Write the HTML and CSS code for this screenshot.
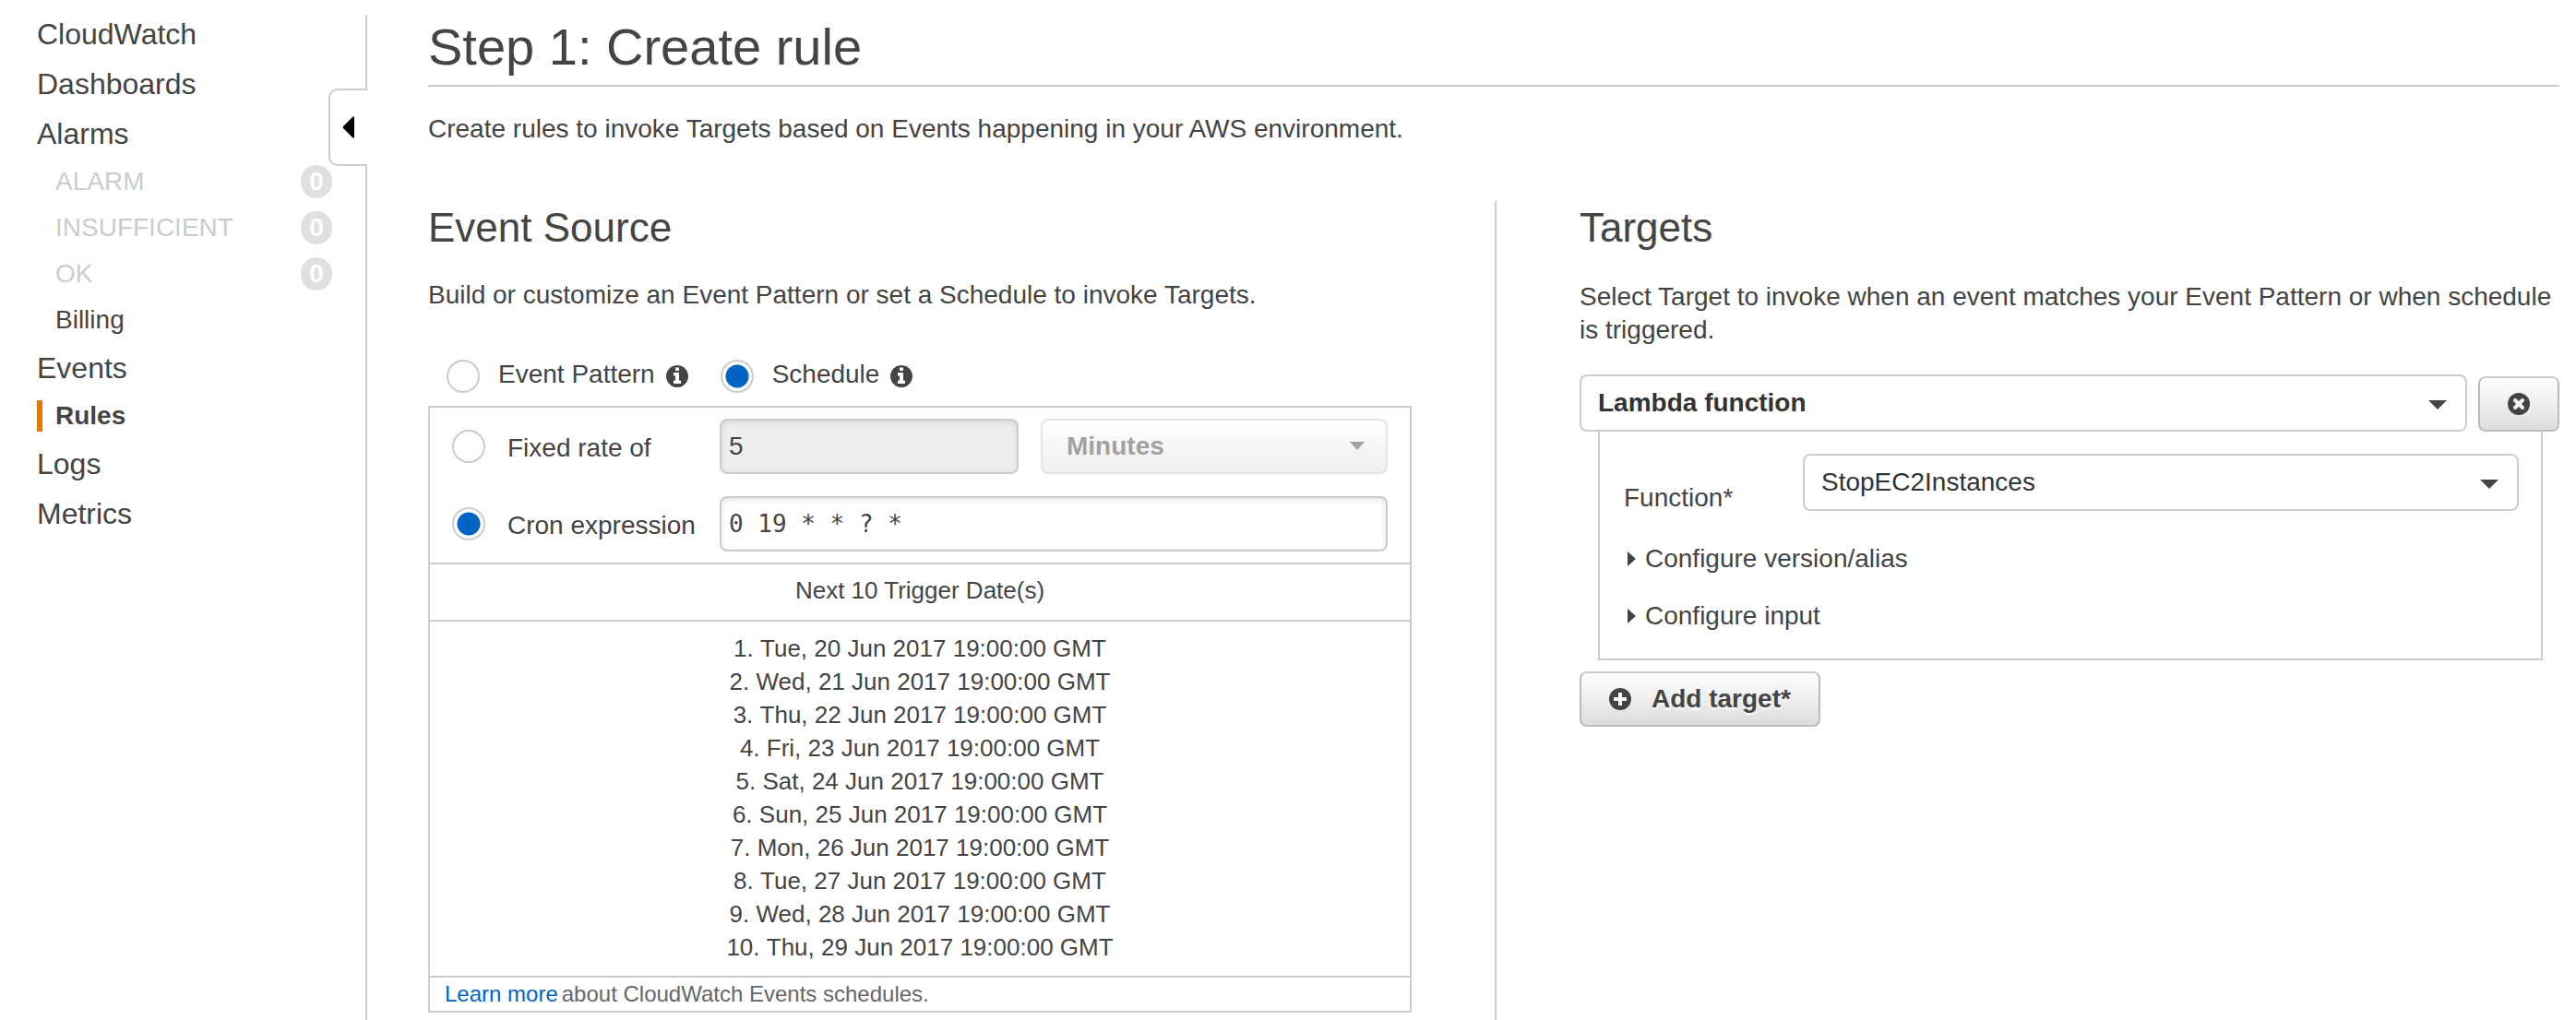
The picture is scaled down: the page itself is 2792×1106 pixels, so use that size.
FILE: index.html
```html
<!DOCTYPE html>
<html lang="en">
<head>
<meta charset="utf-8">
<meta name="viewport" content="width=device-width, initial-scale=1">
<title>CloudWatch - Create rule</title>
<link rel="stylesheet" href="styles.css">
</head>
<body>
<svg class="sprite" aria-hidden="true">
  <symbol id="icon-info" viewBox="0 128 1536 1536">
    <path d="M1024 1376v-160q0-14-9-23t-23-9h-96v-512q0-14-9-23t-23-9h-320q-14 0-23 9t-9 23v160q0 14 9 23t23 9h96v320h-96q-14 0-23 9t-9 23v160q0 14 9 23t23 9h448q14 0 23-9t9-23zm-128-896v-160q0-14-9-23t-23-9h-192q-14 0-23 9t-9 23v160q0 14 9 23t23 9h192q14 0 23-9t9-23zm640 416q0 209-103 385.5t-279.5 279.5-385.5 103-385.5-103-279.5-279.5-103-385.5 103-385.5 279.5-279.5 385.5-103 385.5 103 279.5 279.5 103 385.5z"/>
  </symbol>
</svg>
<div class="layout">
  <nav class="sidebar" aria-label="CloudWatch">
    <ul class="nav">
      <li><a href="#">CloudWatch</a></li>
      <li><a href="#">Dashboards</a></li>
      <li><a href="#">Alarms</a>
        <ul class="subnav">
          <li class="muted"><a href="#">ALARM</a><span class="badge">0</span></li>
          <li class="muted"><a href="#">INSUFFICIENT</a><span class="badge">0</span></li>
          <li class="muted"><a href="#">OK</a><span class="badge">0</span></li>
          <li><a href="#">Billing</a></li>
        </ul>
      </li>
      <li><a href="#">Events</a>
        <ul class="subnav">
          <li class="current"><a href="#" aria-current="page">Rules</a></li>
        </ul>
      </li>
      <li><a href="#">Logs</a></li>
      <li><a href="#">Metrics</a></li>
    </ul>
    <button class="collapse" type="button" aria-label="Collapse navigation">
      <svg width="14" height="24" viewBox="0 0 14 24"><path d="M13 .5V23.500Q12 24 11 23L1 13Q0 12 1 11L11 1Q12 0 13 .5Z"/></svg>
    </button>
  </nav>

  <main class="main">
    <h1>Step 1: Create rule</h1>
    <p class="intro">Create rules to invoke Targets based on Events happening in your AWS environment.</p>

    <form class="columns">
      <section class="source">
        <h2>Event Source</h2>
        <p>Build or customize an Event Pattern or set a Schedule to invoke Targets.</p>

        <div class="modes">
          <input type="radio" name="mode" id="mode-pattern">
          <label for="mode-pattern">Event Pattern</label>
          <svg class="info"><use href="#icon-info"/></svg>
          <input type="radio" name="mode" id="mode-schedule" checked>
          <label for="mode-schedule">Schedule</label>
          <svg class="info"><use href="#icon-info"/></svg>
        </div>

        <div class="panel">
          <div class="schedule">
            <input type="radio" name="schedule" id="fixed-rate">
            <label for="fixed-rate">Fixed rate of</label>
            <input class="text" type="text" value="5" aria-label="Rate" disabled>
            <span class="select select-disabled">
              <select aria-label="Rate unit" disabled><option>Minutes</option></select>
            </span>
            <input type="radio" name="schedule" id="cron" checked>
            <label for="cron">Cron expression</label>
            <input class="text cron" type="text" value="0 19 * * ? *" aria-label="Cron expression value">
          </div>
          <div class="dates-title">Next 10 Trigger Date(s)</div>
          <ol class="dates">
            <li>Tue, 20 Jun 2017 19:00:00 GMT</li>
            <li>Wed, 21 Jun 2017 19:00:00 GMT</li>
            <li>Thu, 22 Jun 2017 19:00:00 GMT</li>
            <li>Fri, 23 Jun 2017 19:00:00 GMT</li>
            <li>Sat, 24 Jun 2017 19:00:00 GMT</li>
            <li>Sun, 25 Jun 2017 19:00:00 GMT</li>
            <li>Mon, 26 Jun 2017 19:00:00 GMT</li>
            <li>Tue, 27 Jun 2017 19:00:00 GMT</li>
            <li>Wed, 28 Jun 2017 19:00:00 GMT</li>
            <li>Thu, 29 Jun 2017 19:00:00 GMT</li>
          </ol>
          <div class="learn"><a href="#">Learn more</a><span>about CloudWatch Events schedules.</span></div>
        </div>
      </section>

      <section class="targets">
        <h2>Targets</h2>
        <p>Select Target to invoke when an event matches your Event Pattern or when schedule is triggered.</p>

        <div class="target-head">
          <span class="select select-strong">
            <select aria-label="Target type"><option>Lambda function</option></select>
          </span>
          <button class="button remove" type="button" aria-label="Remove target">
            <svg width="24" height="24" viewBox="0 0 24 24"><circle class="disc" cx="12" cy="12" r="12"/><path class="cut round" d="M8 8l8 8M16 8l-8 8"/></svg>
          </button>
        </div>
        <div class="target-body">
          <div class="field">
            <label for="function">Function*</label>
            <span class="select">
              <select id="function"><option>StopEC2Instances</option></select>
            </span>
          </div>
          <details><summary>Configure version/alias</summary></details>
          <details><summary>Configure input</summary></details>
        </div>
        <button class="button add" type="button">
          <svg width="24" height="24" viewBox="0 0 24 24"><circle class="disc" cx="12" cy="12" r="12"/><path class="cut" d="M12 5v14M5 12h14"/></svg>
          Add target*
        </button>
      </section>
    </form>
  </main>
</div>
</body>
</html>
```

FILE: styles.css
```css
* {
  box-sizing: border-box;
}

body {
  margin: 0;
  background: #fff;
  color: #444;
  font: 28px/36px "Liberation Sans", Arial, sans-serif;
}

h1, h2, p, ul, ol {
  margin: 0;
  padding: 0;
  font-weight: normal;
}

ul, ol {
  list-style: none;
}

a {
  color: inherit;
  text-decoration: none;
}

input, select, button {
  margin: 0;
  color: inherit;
  font: inherit;
}

.sprite {
  display: none;
}

.layout {
  display: flex;
  min-height: 100vh;
}

/* Sidebar */

.sidebar {
  position: relative;
  flex: none;
  width: 398px;
  margin-top: 16px;
  padding-left: 40px;
  border-right: 2px solid #ccc;
}

.nav {
  margin-top: -6px;
  font-size: 32px;
  line-height: 54px;
}

.subnav {
  padding-right: 36px;
  font-size: 28px;
  line-height: 50px;
}

.subnav li {
  display: flex;
  align-items: center;
  justify-content: space-between;
  height: 50px;
  padding-left: 20px;
}

.subnav .muted {
  color: #ccc;
}

.subnav .current {
  position: relative;
  font-weight: bold;
}

.current::before {
  content: "";
  position: absolute;
  left: 0;
  top: 8px;
  width: 6px;
  height: 34px;
  background: #e17a00;
}

.badge {
  width: 34px;
  height: 36px;
  border-radius: 17px;
  background: #e0e0e0;
  color: #fff;
  font-weight: bold;
  line-height: 36px;
  text-align: center;
}

.collapse {
  position: absolute;
  top: 80px;
  right: -2px;
  display: flex;
  align-items: center;
  width: 42px;
  height: 84px;
  padding: 0 0 0 13px;
  border: 2px solid #ccc;
  border-right: 0;
  border-radius: 10px 0 0 10px;
  background: #fff;
  color: #000;
}

.collapse svg {
  flex: none;
}

/* Main column */

.main {
  flex: 1;
  display: flex;
  flex-direction: column;
  min-width: 0;
  padding: 18px 18px 0 66px;
}

h1 {
  padding-bottom: 8px;
  border-bottom: 2px solid #ccc;
  font-size: 56px;
  line-height: 66px;
}

h2 {
  font-size: 44px;
  line-height: 58px;
}

.intro {
  margin: 28px 0 60px;
}

.columns {
  flex: 1;
  display: grid;
  grid-template-columns: minmax(0, 193fr) minmax(0, 192fr);
}

.source {
  padding: 0 90px 8px 0;
  border-right: 2px solid #ccc;
}

.source h2 {
  margin-bottom: 26px;
}

.targets {
  padding-left: 90px;
}

.targets h2 {
  margin-bottom: 28px;
}

/* Form controls */

input[type="radio"] {
  flex: none;
  appearance: none;
  width: 36px;
  height: 36px;
  border: 2px solid #ccc;
  border-radius: 50%;
  background: #fff;
}

input[type="radio"]:checked {
  background: radial-gradient(circle, #0064c3 12px, #fff 13px);
}

.text {
  width: 100%;
  height: 60px;
  padding: 0 8px;
  border: 2px solid #ccc;
  border-radius: 8px;
  background: #fff;
  box-shadow: inset 0 2px 6px #e4e4e4;
}

.text:disabled {
  background: #eee;
  box-shadow: inset 0 2px 6px #d4d4d4;
}

.cron {
  grid-column: 3 / 5;
  font-family: "DejaVu Sans Mono", monospace;
  font-size: 26px;
}

.select {
  position: relative;
  display: block;
  flex: 1;
}

.select select {
  appearance: none;
  display: block;
  width: 100%;
  height: 62px;
  padding: 0 60px 0 18px;
  border: 2px solid #ccc;
  border-radius: 8px;
  background: #fff;
  color: #333;
  opacity: 1;
}

.select::after {
  content: "";
  position: absolute;
  top: 28px;
  right: 22px;
  width: 20px;
  height: 10px;
  background: #444;
  clip-path: polygon(0 0, 100% 0, 50% 100%);
  pointer-events: none;
}

.select-strong select {
  font-weight: bold;
}

.select-disabled select {
  height: 60px;
  padding-left: 26px;
  border-color: #e4e4e4;
  background: linear-gradient(#fff, #eee);
  color: #a1a1a1;
  font-weight: bold;
}

.select-disabled::after {
  top: 25px;
  right: 25px;
  width: 16px;
  height: 9px;
  background: #a1a1a1;
}

.button {
  display: flex;
  align-items: center;
  justify-content: center;
  height: 60px;
  border: 2px solid #bbb;
  border-top-color: #ccc;
  border-radius: 8px;
  background: linear-gradient(#fff, #ddd);
  font-weight: bold;
  text-shadow: 0 2px 2px #fff;
}

.disc {
  fill: #444;
}

.cut {
  fill: none;
  stroke: #f4f4f4;
  stroke-width: 4;
}

.round {
  stroke-linecap: round;
}

/* Event source */

.modes {
  display: flex;
  align-items: center;
  margin: 50px 0 12px;
  padding-left: 20px;
}

.modes label {
  padding: 0 12px 4px 20px;
}

.info {
  width: 24px;
  height: 24px;
  margin-right: 35px;
  fill: #444;
}

.panel {
  border: 2px solid #ccc;
}

.schedule {
  display: grid;
  grid-template-columns: 36px 206px minmax(0, 324fr) minmax(0, 376fr);
  align-items: center;
  gap: 24px;
  padding: 12px 24px;
}

.schedule label {
  padding-top: 4px;
}

.dates-title {
  padding: 10px 0 14px;
  border: solid #ccc;
  border-width: 2px 0;
  font-size: 26px;
  text-align: center;
}

.dates {
  padding: 11px 0 13px;
  font-size: 26px;
  list-style: decimal inside;
  text-align: center;
}

.learn {
  display: flex;
  gap: 4px;
  padding-left: 16px;
  border-top: 2px solid #ccc;
  color: #666;
  font-size: 24px;
}

.learn a {
  color: #0064c3;
}

/* Targets */

.target-head {
  display: flex;
  align-items: flex-end;
  gap: 12px;
  margin-top: 30px;
}

.remove {
  width: 88px;
}

.target-body {
  margin: 0 18px 0 20px;
  padding: 24px 24px 28px 26px;
  border: 2px solid #ccc;
  border-top: 0;
}

.field {
  display: flex;
  align-items: flex-start;
  margin-bottom: 30px;
}

.field label {
  width: 194px;
  padding-top: 30px;
}

summary {
  display: flex;
  align-items: center;
  gap: 10px;
  padding-left: 4px;
}

summary::before {
  content: "";
  width: 9px;
  height: 16px;
  background: #444;
  clip-path: polygon(0 0, 100% 50%, 0 100%);
}

details + details {
  margin-top: 26px;
}

.add {
  gap: 22px;
  margin-top: 12px;
  padding: 0 30px;
}
```
